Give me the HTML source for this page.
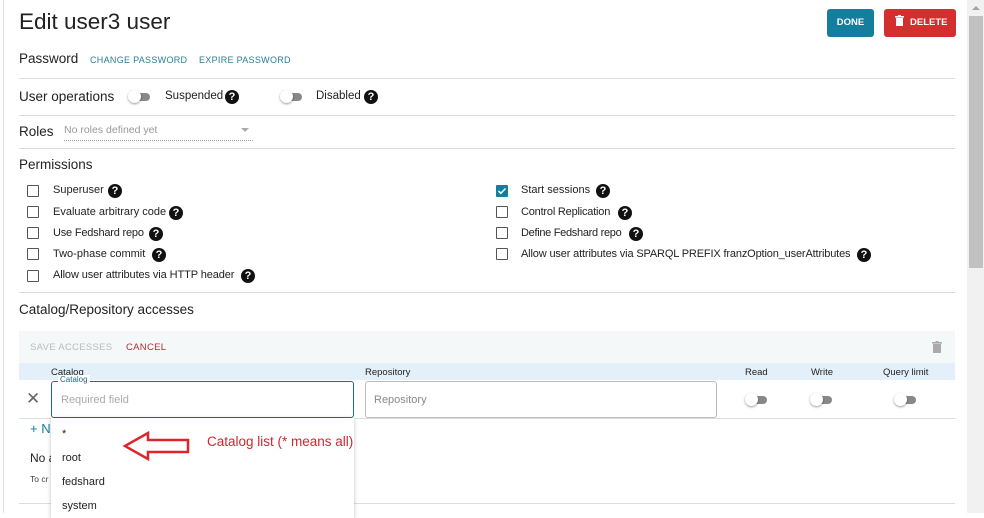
<!DOCTYPE html>
<html><head><meta charset="utf-8"><style>
*{margin:0;padding:0;box-sizing:border-box}
body{width:984px;height:513px;overflow:hidden;background:#fff;font-family:"Liberation Sans",sans-serif;color:#222;position:relative}
.a{position:absolute;white-space:nowrap}
.hr{position:absolute;left:19px;width:936px;height:1px;background:#dcdcdc}
.lab{font-size:11.5px;color:#222}
.sec{font-size:13.5px;color:#222}
.sm{font-size:9px;color:#2a7f96;letter-spacing:.3px}
.cb{position:absolute;width:12px;height:12px;border:1.5px solid #555;border-radius:1px}
.q{position:absolute;width:14px;height:14px;border-radius:50%;background:#111;color:#fff;font-size:11px;font-weight:bold;text-align:center;line-height:14px}
.tg{position:absolute;width:22px;height:10px}
.tg:before{content:"";position:absolute;left:4px;top:1px;width:18px;height:8px;border-radius:4px;background:#888}
.tg:after{content:"";position:absolute;left:0;top:-2px;width:13px;height:13px;border-radius:50%;background:#fff;box-shadow:0 1px 2px rgba(0,0,0,.4)}
</style></head><body>
<div class="a" style="left:3px;top:0;width:1px;height:513px;background:#e2e2e2"></div>
<div class="a" style="left:19px;top:9px;font-size:22.5px;color:#222">Edit user3 user</div>
<div class="a" style="left:827px;top:9px;width:47px;height:28px;background:#137e9e;border-radius:3px;color:#fff;font-size:9.5px;font-weight:bold;text-align:center;line-height:28px">DONE</div>
<div class="a" style="left:884px;top:9px;width:72px;height:28px;background:#d32f2f;border-radius:3px;color:#fff;font-size:9.5px;font-weight:bold;line-height:28px;padding-left:11px"><svg width="9" height="11" viewBox="0 0 9 11" style="vertical-align:-1px;margin-right:6px"><rect x="0" y="1" width="9" height="1.6" fill="#fff"/><rect x="3" y="0" width="3" height="1.5" fill="#fff"/><rect x="1" y="3" width="7" height="8" fill="#fff"/></svg>DELETE</div>
<div class="a sec" style="left:19px;top:51px">Password</div>
<div class="a sm" style="left:90px;top:55px">CHANGE PASSWORD</div>
<div class="a sm" style="left:199px;top:55px">EXPIRE PASSWORD</div>
<div class="hr" style="top:78px"></div>
<div class="a sec" style="left:19px;top:89px">User operations</div>
<div class="tg" style="left:128px;top:92px"></div>
<div class="a lab" style="left:165px;top:90px">Suspended</div>
<div class="q" style="left:225px;top:90px">?</div>
<div class="tg" style="left:280px;top:92px"></div>
<div class="a lab" style="left:316px;top:90px">Disabled</div>
<div class="q" style="left:364px;top:90px">?</div>
<div class="hr" style="top:115px"></div>
<div class="a sec" style="left:19px;top:124px">Roles</div>
<div class="a" style="left:64px;top:124px;font-size:10.5px;color:#999">No roles defined yet</div>
<div class="a" style="left:64px;top:140px;width:189px;border-top:1px dotted #999"></div>
<div class="a" style="left:241px;top:128px;border:4px solid transparent;border-top:4px solid #aaa"></div>
<div class="hr" style="top:148px"></div>
<div class="a sec" style="left:19px;top:157px">Permissions</div>
<div class="cb" style="left:27px;top:185px"></div><div class="a lab" style="left:53px;top:184px;font-size:11px">Superuser</div><div class="q" style="left:108px;top:184px">?</div>
<div class="cb" style="left:27px;top:206px"></div><div class="a lab" style="left:53px;top:206px;font-size:11px">Evaluate arbitrary code</div><div class="q" style="left:169px;top:206px">?</div>
<div class="cb" style="left:27px;top:227px"></div><div class="a lab" style="left:53px;top:227px;font-size:11px;letter-spacing:-.2px">Use Fedshard repo</div><div class="q" style="left:149px;top:227px">?</div>
<div class="cb" style="left:27px;top:248px"></div><div class="a lab" style="left:53px;top:248px;font-size:11px">Two-phase commit</div><div class="q" style="left:152px;top:248px">?</div>
<div class="cb" style="left:27px;top:270px"></div><div class="a lab" style="left:53px;top:269px;font-size:11px;letter-spacing:-.1px">Allow user attributes via HTTP header</div><div class="q" style="left:241px;top:269px">?</div>
<div class="cb" style="left:496px;top:185px;background:#137e9e;border-color:#137e9e"><svg width="10" height="10" viewBox="0 0 10 10" style="position:absolute;left:0;top:0"><path d="M1.5 5l2.3 2.3L8.5 2.5" stroke="#fff" stroke-width="1.6" fill="none"/></svg></div><div class="a lab" style="left:521px;top:184px;font-size:11px">Start sessions</div><div class="q" style="left:596px;top:184px">?</div>
<div class="cb" style="left:496px;top:206px"></div><div class="a lab" style="left:521px;top:206px;font-size:11px;letter-spacing:-.2px">Control Replication</div><div class="q" style="left:618px;top:206px">?</div>
<div class="cb" style="left:496px;top:227px"></div><div class="a lab" style="left:521px;top:227px;font-size:11px;letter-spacing:-.3px">Define Fedshard repo</div><div class="q" style="left:629px;top:227px">?</div>
<div class="cb" style="left:496px;top:248px"></div><div class="a lab" style="left:521px;top:248px;font-size:11px;letter-spacing:-.15px">Allow user attributes via SPARQL PREFIX franzOption_userAttributes</div><div class="q" style="left:857px;top:248px">?</div>
<div class="hr" style="top:292px"></div>
<div class="a sec" style="left:19px;top:302px">Catalog/Repository accesses</div>
<div class="a" style="left:19px;top:331px;width:936px;height:32px;background:#f4f8f9"></div>
<div class="a" style="left:30px;top:342px;font-size:9.5px;color:#bbb;letter-spacing:.3px">SAVE ACCESSES</div>
<div class="a" style="left:126px;top:342px;font-size:9.5px;color:#b03030;letter-spacing:.3px">CANCEL</div>
<svg class="a" style="left:932px;top:341px" width="10" height="12" viewBox="0 0 10 12"><rect x="0" y="1" width="10" height="1.6" fill="#aaa"/><rect x="3.5" y="0" width="3" height="1.5" fill="#aaa"/><rect x="1" y="3" width="8" height="9" fill="#aaa"/></svg>
<div class="a" style="left:19px;top:363px;width:936px;height:17px;background:#e3f0fa"></div>
<div class="a" style="left:51px;top:367px;font-size:9.5px">Catalog</div>
<div class="a" style="left:365px;top:367px;font-size:9.5px">Repository</div>
<div class="a" style="left:745px;top:367px;font-size:9.5px">Read</div>
<div class="a" style="left:811px;top:367px;font-size:9.5px">Write</div>
<div class="a" style="left:883px;top:367px;font-size:9.5px">Query limit</div>
<div class="a" style="left:26px;top:389px;font-size:17px;color:#666;line-height:20px">✕</div>
<div class="a" style="left:51px;top:381px;width:303px;height:37px;border:1px solid #1a6e85;border-radius:3px"></div>
<div class="a" style="left:58px;top:375px;font-size:8px;color:#1a6e85;background:#fff;padding:0 2px">Catalog</div>
<div class="a" style="left:61px;top:394px;font-size:11px;color:#aaa">Required field</div>
<div class="a" style="left:365px;top:381px;width:352px;height:37px;border:1px solid #bbb;border-radius:3px"></div>
<div class="a" style="left:374px;top:394px;font-size:11px;color:#888">Repository</div>
<div class="tg" style="left:745px;top:395px"></div>
<div class="tg" style="left:810px;top:395px"></div>
<div class="tg" style="left:894px;top:395px"></div>
<div class="a" style="left:19px;top:418px;width:936px;height:1px;background:#ddd"></div>
<div class="a" style="left:30px;top:421px;font-size:13px;color:#137e9e">+ N</div>
<div class="a" style="left:30px;top:451px;font-size:12px">No a</div>
<div class="a" style="left:30px;top:474px;font-size:8.5px;color:#444">To cr</div>
<div class="a" style="left:19px;top:503px;width:936px;height:1px;background:#ddd"></div>
<div class="a" style="left:51px;top:418px;width:303px;height:100px;background:#fff;box-shadow:0 1px 4px rgba(0,0,0,.25)"></div>
<div class="a" style="left:62px;top:428px;font-size:11px">*</div>
<div class="a" style="left:62px;top:452px;font-size:11px">root</div>
<div class="a" style="left:62px;top:476px;font-size:11px">fedshard</div>
<div class="a" style="left:62px;top:500px;font-size:11px">system</div>
<svg class="a" style="left:122px;top:430px" width="70" height="32" viewBox="0 0 70 32"><path d="M3 16L26 3V10H66V22H26V29Z" fill="none" stroke="#e0242c" stroke-width="2.5" stroke-linejoin="miter"/></svg>
<div class="a" style="left:207px;top:434px;font-size:13.5px;color:#d0262e">Catalog list (* means all)</div>
<div class="a" style="left:967px;top:0;width:17px;height:513px;background:#f1f1f1"></div>
<div class="a" style="left:969px;top:16px;width:14px;height:252px;background:#c1c1c1"></div>
<div class="a" style="left:972px;top:6px;border:4px solid transparent;border-bottom:4px solid #a3a3a3;border-top:0"></div>
</body></html>
